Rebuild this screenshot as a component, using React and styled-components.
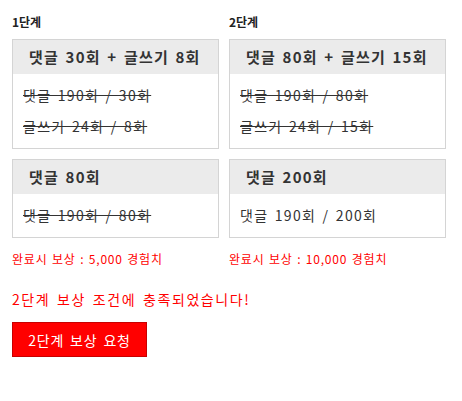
import React from 'react';
import styled, { createGlobalStyle } from 'styled-components';

const GlobalStyle = createGlobalStyle`
  body {
    margin: 0;
    background: #fff;
    font-family: "Noto Sans CJK KR", "Noto Sans", sans-serif;
    color: #333;
  }
`;

const Page = styled.div`
  padding: 12px 12px 0 12px;
  width: 434px;
`;

const Stages = styled.div`
  display: grid;
  grid-template-columns: 207px 217px;
  column-gap: 10px;
`;

const Stage = styled.section`
  display: flex;
  flex-direction: column;
`;

const StageLabel = styled.h3`
  margin: 0;
  height: 27px;
  font-size: 12px;
  font-weight: bold;
  line-height: 20px;
  color: #222;
`;

const Mission = styled.div`
  border: 1px solid #d4d4d4;
  margin-bottom: 10px;
`;

const MissionHead = styled.div`
  background: #ebebeb;
  height: 34px;
  line-height: 34px;
  padding-left: 16px;
  font-size: 15px;
  font-weight: bold;
  color: #333;
  word-spacing: 2px;
  letter-spacing: 1.2px;
`;

const MissionBody = styled.div`
  padding: 6px 10px 6px;
`;

const Progress = styled.p`
  margin: 0;
  height: 31px;
  line-height: 31px;
  font-size: 14px;
  color: #333;
  word-spacing: 2px;
  letter-spacing: 1.3px;
  text-decoration: ${(p) => (p.$done ? 'line-through' : 'none')};
`;

const Reward = styled.p`
  margin: 2px 0 0;
  font-size: 12px;
  line-height: 18px;
  color: #ff0000;
  word-spacing: 1px;
  letter-spacing: 0.8px;
`;

const Notice = styled.p`
  margin: 21px 0 0;
  font-size: 14px;
  line-height: 20px;
  color: #ff0000;
  letter-spacing: 1.6px;
  word-spacing: 2px;
`;

const RequestButton = styled.button`
  margin-top: 13px;
  width: 135px;
  height: 35px;
  background: #ff0000;
  border: 1px solid #c80000;
  color: #fff;
  font-family: inherit;
  font-size: 14px;
  letter-spacing: 0.8px;
  word-spacing: 2px;
  cursor: pointer;
`;

const stages = [
  {
    label: '1단계',
    reward: '완료시 보상 : 5,000 경험치',
    missions: [
      {
        title: '댓글 30회 + 글쓰기 8회',
        rows: [
          { text: '댓글 190회 / 30회', done: true },
          { text: '글쓰기 24회 / 8회', done: true },
        ],
      },
      { title: '댓글 80회', rows: [{ text: '댓글 190회 / 80회', done: true }] },
    ],
  },
  {
    label: '2단계',
    reward: '완료시 보상 : 10,000 경험치',
    missions: [
      {
        title: '댓글 80회 + 글쓰기 15회',
        rows: [
          { text: '댓글 190회 / 80회', done: true },
          { text: '글쓰기 24회 / 15회', done: true },
        ],
      },
      { title: '댓글 200회', rows: [{ text: '댓글 190회 / 200회', done: false }] },
    ],
  },
];

export default function App() {
  return (
    <>
      <GlobalStyle />
      <Page>
        <Stages>
          {stages.map((s) => (
            <Stage key={s.label}>
              <StageLabel>{s.label}</StageLabel>
              {s.missions.map((m) => (
                <Mission key={m.title}>
                  <MissionHead>{m.title}</MissionHead>
                  <MissionBody>
                    {m.rows.map((r) => (
                      <Progress key={r.text} $done={r.done}>
                        {r.text}
                      </Progress>
                    ))}
                  </MissionBody>
                </Mission>
              ))}
              <Reward>{s.reward}</Reward>
            </Stage>
          ))}
        </Stages>
        <Notice>2단계 보상 조건에 충족되었습니다!</Notice>
        <RequestButton>2단계 보상 요청</RequestButton>
      </Page>
    </>
  );
}
